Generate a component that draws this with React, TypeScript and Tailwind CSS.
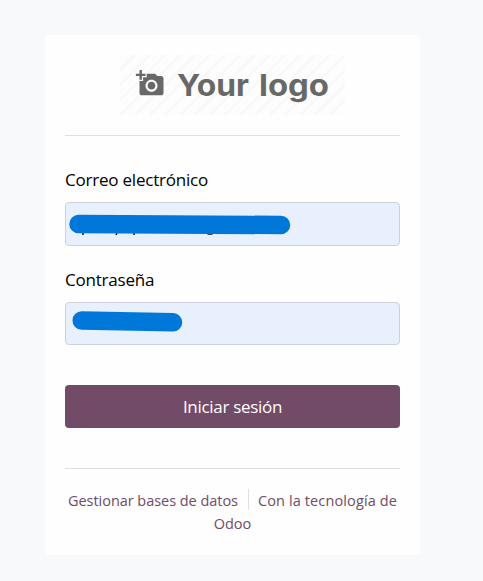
function Logo() {
  return (
    <svg width="225" height="60" viewBox="0 0 225 60" className="block" role="img" aria-label="Your logo">
      <defs>
        <pattern id="stripes" width="15" height="15" patternUnits="userSpaceOnUse">
          <path d="M-2 17 17 -2M-9.500 9.500 9.500 -9.500M5.500 24.500 24.500 5.500" stroke="#f8f8f8" strokeWidth="2.200" />
        </pattern>
      </defs>
      <rect width="225" height="60" fill="#fdfdfd" />
      <rect width="225" height="60" fill="url(#stripes)" />
      <g transform="translate(15.900 13.900) scale(1.2)" fill="#686868">
        <path d="M3 4V1h2v3h3v2H5v3H3V6H0V4h3zm3 6V7h3V4h7l1.830 2H21c1.100 0 2 .900 2 2v12c0 1.100-.900 2-2 2H5c-1.100 0-2-.900-2-2V10h3zm7 9c2.760 0 5-2.240 5-5s-2.240-5-5-5-5 2.240-5 5 2.240 5 5 5zm-3.200-5c0 1.770 1.430 3.200 3.200 3.200s3.200-1.430 3.200-3.200-1.430-3.200-3.200-3.200-3.200 1.430-3.200 3.200z" />
      </g>
      <g fontFamily="Inter, sans-serif" fontWeight="700" fontSize="30.500" fill="#686868">
        <text x="57" y="41" textLength="72" lengthAdjust="spacingAndGlyphs">Your</text>
        <text x="139" y="41" textLength="70" lengthAdjust="spacingAndGlyphs">logo</text>
      </g>
    </svg>
  );
}

function Field({ label, className, children }: { label: string; className: string; children: React.ReactNode }) {
  return (
    <div>
      <div className="mb-[9px] h-[26px] text-[17px] leading-[26px] tracking-[-0.22px] text-black">{label}</div>
      <div className={"relative overflow-hidden rounded-[4px] border border-[#cdd1d9] bg-[#e8f0fe] " + className}>{children}</div>
    </div>
  );
}

export default function App() {
  return (
    <div className="h-[581px] w-[483px] bg-[#f8f9fb] pt-[35px] pl-[45px] font-['Open_Sans','Noto_Sans',sans-serif]">
      <main className="h-[520px] w-[375px] rounded-[4px] bg-[#fefefe] px-5 pt-5">
        <header className="flex h-[81px] items-start justify-center border-b border-[#dedfe2]">
          <Logo />
        </header>
        <div className="mt-[31px]">
          <Field label="Correo electrónico" className="h-[44px]">
            <svg width="333" height="42" className="absolute top-0 left-0">
              <path d="M17 30v2M51 30l-1 2M68 30v2M141.500 31h5" stroke="#111" strokeWidth="1.500" fill="none" />
              <path d="M12.500 21 215 22" stroke="#0078d9" strokeWidth="18.500" strokeLinecap="round" />
            </svg>
          </Field>
        </div>
        <div className="mt-[21px]">
          <Field label="Contraseña" className="h-[43px]">
            <svg width="333" height="41" className="absolute top-0 left-0">
              <path d="M15.700 17.500 107 19.300" stroke="#0078d9" strokeWidth="18.500" strokeLinecap="round" />
            </svg>
          </Field>
        </div>
        <button className="mt-10 block h-[43px] w-full rounded-[4px] bg-[#714b67] pt-px text-[17px] leading-[42px] tracking-[-0.300px] text-white">
          Iniciar sesión
        </button>
        <footer className="mt-10 flex flex-col items-center border-t border-[#dedfe2] pt-5 text-[14.500px] leading-[23px] tracking-[-0.040px] text-[#714b67]">
          <div className="flex items-start whitespace-nowrap">
            <a>Gestionar bases de datos</a>
            <span className="mr-[9px] ml-[10px] h-[21px] w-px bg-[#dee0e6]" />
            <a className="tracking-[0.120px]">Con la tecnología de</a>
          </div>
          <a>Odoo</a>
        </footer>
      </main>
    </div>
  );
}
